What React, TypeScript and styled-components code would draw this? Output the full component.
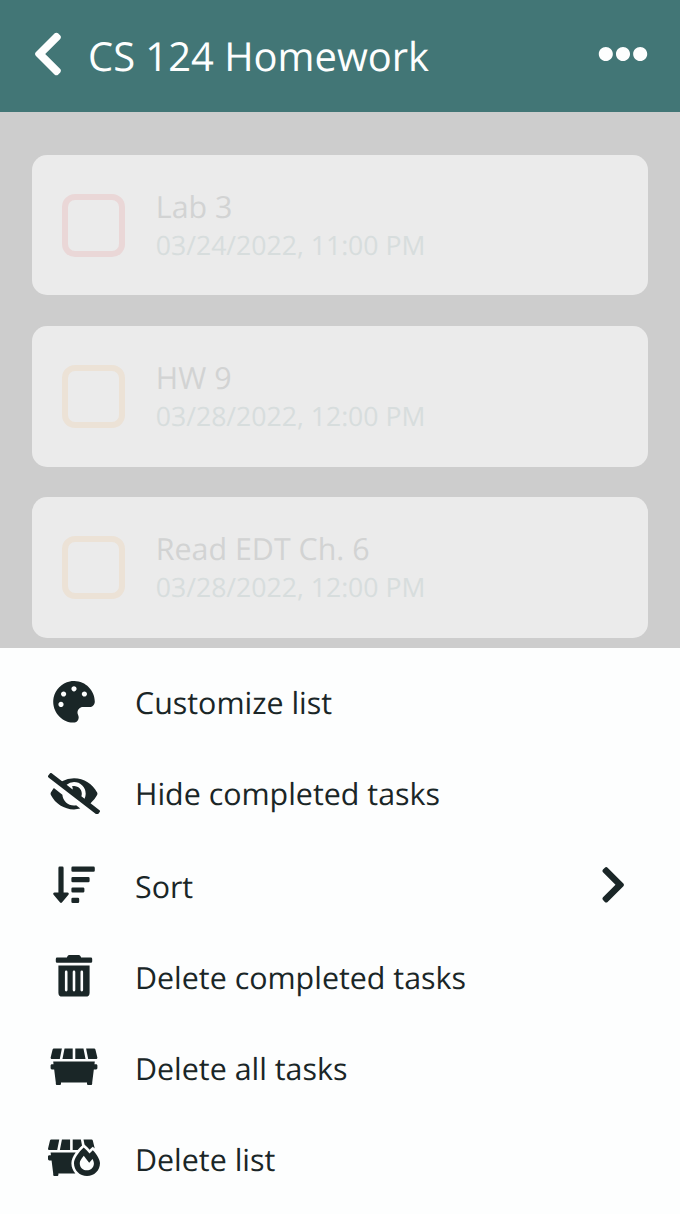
import React from "react";
import styled, { createGlobalStyle } from "styled-components";
import type { IconType } from "react-icons";
import {
  FaChevronLeft,
  FaChevronRight,
  FaDumpster,
  FaDumpsterFire,
  FaEllipsisH,
  FaEyeSlash,
  FaPalette,
  FaSortAmountDown,
  FaTrashAlt,
} from "react-icons/fa";

const GlobalStyle = createGlobalStyle`
  *, *::before, *::after { box-sizing: border-box; }
  body {
    margin: 0;
    font-family: "Open Sans", "Noto Sans", sans-serif;
    text-rendering: geometricPrecision;
    color: #1a2627;
    background: #fdfefe;
  }
  button {
    border: 0;
    padding: 0;
    background: none;
    color: inherit;
    font: inherit;
    text-align: left;
    text-rendering: inherit;
  }
  svg { display: block; }
`;

const Screen = styled.div`
  display: flex;
  flex-direction: column;
  height: 1214px;
  width: 680px;
  overflow: hidden;
`;

const Header = styled.header`
  display: flex;
  align-items: center;
  flex: none;
  height: 112px;
  padding: 0 32px 4px 23px;
  background: #427676;
  color: #fdfefe;
`;

const Title = styled.h1`
  flex: 1;
  margin: 4px 0 0 15px;
  font-size: 39.9px;
  font-weight: 400;
  line-height: 56px;
  white-space: nowrap;
`;

const TaskArea = styled.main`
  flex: none;
  height: 536px;
  padding: 42.6px 32px 0;
  overflow: hidden;
  background: #cdcdcd;
`;

const TaskCard = styled.article`
  display: flex;
  align-items: center;
  height: 140.8px;
  margin-bottom: 30.4px;
  padding: 0 30.4px;
  border-radius: 15px;
  background: #ebebeb;
`;

const Checkbox = styled.span<{ $color: string }>`
  flex: none;
  width: 63px;
  height: 63px;
  margin: 0.6px 30.4px 0 0;
  border: 6px solid ${(p) => p.$color};
  border-radius: 13px;
`;

const TaskText = styled.div`
  padding-top: 1px;
`;

const TaskName = styled.div`
  font-size: 30.4px;
  line-height: 40px;
  color: #d2d3d3;
`;

const TaskDue = styled.div`
  font-size: 26.6px;
  line-height: 37px;
  color: #d7dddd;
`;

const Menu = styled.nav`
  display: flex;
  flex-direction: column;
  flex: 1;
  padding: 8.6px 49px 0 48px;
`;

const MenuItem = styled.button`
  display: flex;
  align-items: center;
  flex: none;
  height: 91.2px;
`;

const IconSlot = styled.span`
  display: flex;
  flex: none;
  margin-right: 35px;

  svg {
    width: 52px;
    height: 41.6px;
  }
`;

const SubmenuArrow = styled(FaChevronRight)`
  flex: none;
  width: 36.4px;
  height: 41.6px;
`;

const MenuLabel = styled.span<{ $drop: number }>`
  flex: 1;
  padding-top: ${(p) => p.$drop}px;
  font-size: 30.4px;
  line-height: 42px;
`;

const tasks = [
  { name: "Lab 3", due: "03/24/2022, 11:00 PM", color: "#ead7d7" },
  { name: "HW 9", due: "03/28/2022, 12:00 PM", color: "#ece2d6" },
  { name: "Read EDT Ch. 6", due: "03/28/2022, 12:00 PM", color: "#ece2d6" },
];

const actions: { label: string; icon: IconType; drop: number; submenu?: boolean }[] = [
  { label: "Customize list", icon: FaPalette, drop: 2 },
  { label: "Hide completed tasks", icon: FaEyeSlash, drop: 2 },
  { label: "Sort", icon: FaSortAmountDown, drop: 5, submenu: true },
  { label: "Delete completed tasks", icon: FaTrashAlt, drop: 4 },
  { label: "Delete all tasks", icon: FaDumpster, drop: 4 },
  { label: "Delete list", icon: FaDumpsterFire, drop: 4 },
];

export default function App() {
  return (
    <>
      <GlobalStyle />
      <Screen>
        <Header>
          <button aria-label="Back">
            <FaChevronLeft size={50} />
          </button>
          <Title>CS 124 Homework</Title>
          <button aria-label="More options">
            <FaEllipsisH size={50} />
          </button>
        </Header>
        <TaskArea>
          {tasks.map((task) => (
            <TaskCard key={task.name}>
              <Checkbox $color={task.color} />
              <TaskText>
                <TaskName>{task.name}</TaskName>
                <TaskDue>{task.due}</TaskDue>
              </TaskText>
            </TaskCard>
          ))}
        </TaskArea>
        <Menu>
          {actions.map(({ label, icon: Icon, drop, submenu }) => (
            <MenuItem key={label}>
              <IconSlot>
                <Icon />
              </IconSlot>
              <MenuLabel $drop={drop}>{label}</MenuLabel>
              {submenu && <SubmenuArrow />}
            </MenuItem>
          ))}
        </Menu>
      </Screen>
    </>
  );
}
